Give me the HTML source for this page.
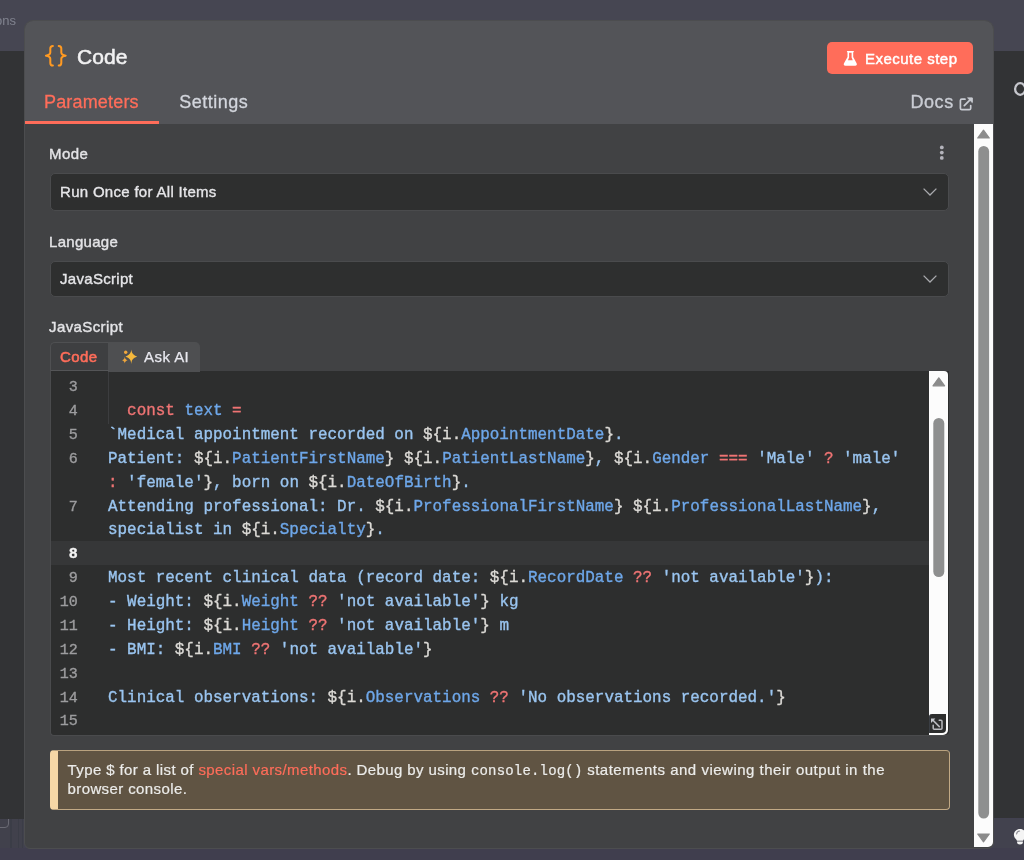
<!DOCTYPE html>
<html><head><meta charset="utf-8"><style>*{box-sizing:border-box;margin:0;padding:0}
html,body{width:1024px;height:860px;overflow:hidden}
#root{position:absolute;left:0;top:0;width:1024px;height:860px;will-change:transform}
body{position:relative;background:#424150;font-family:"Liberation Sans",sans-serif}
.abs{position:absolute}
.t{position:absolute;white-space:pre;line-height:1}
.code{-webkit-text-stroke:0.35px currentColor;position:absolute;white-space:pre;font-family:"Liberation Mono",monospace;font-size:15.925px;line-height:23.88px;height:23.88px}
.s{color:#9ac5f0}.w{color:#dcdad6}.p{color:#6ea7e9}.k{color:#ef7474}
</style></head><body>
<div id="root"><div class="abs" style="left:0;top:0;width:1024px;height:51px;background:#464652"></div>
<span class="t" style="left:-5px;top:13.89px;font-size:13px;color:#80838f;">ons</span>

<div class="abs" style="left:0;top:819px;width:24px;height:29px;background:#41414c"></div>
<div class="abs" style="left:10px;top:819px;width:1.5px;height:29px;background:#3b3d47"></div><div class="abs" style="left:17.5px;top:819px;width:1.5px;height:29px;background:#3b3d47"></div><div class="abs" style="left:21.5px;top:819px;width:1.5px;height:29px;background:#3b3d47"></div>
<div class="abs" style="left:-6px;top:812px;width:15px;height:16px;border:1px solid #6a6a74;border-radius:4px"></div>
<div class="abs" style="left:0;top:51px;width:24px;height:768px;background:#323335"></div>
<div class="abs" style="left:994px;top:51px;width:30px;height:767px;background:#323335"></div>
<svg class="abs" style="left:1008px;top:78px" width="20" height="22" viewBox="0 0 20 22"><ellipse cx="12.2" cy="11" rx="5.1" ry="5.8" fill="none" stroke="#c6c7cd" stroke-width="2.3"/></svg>
<div class="abs" style="left:994px;top:818.7px;width:30px;height:29.3px;background:#42424e"></div>
<div class="abs" style="left:0;top:848px;width:1024px;height:12px;background:#403e4e"></div>
<div class="abs" style="left:24px;top:20px;width:970px;height:829px;background:#414244;border-radius:9px 9px 6px 6px;border:1px solid #4c4d4f;overflow:hidden"><div class="abs" style="left:0;top:0;width:970px;height:102.5px;background:#535458"></div></div>
<svg class="abs" style="left:0;top:0" width="1024" height="860" viewBox="0 0 1024 860">
<g fill="none" stroke="#ff9a22" stroke-width="2" stroke-linecap="round" stroke-linejoin="round">
<path d="M52.9 45.9 C51 45.9 50.3 46.8 50.3 48.5 V52.6 C50.3 53.9 48.6 55.3 45.9 55.7 C48.6 56.1 50.3 57.5 50.3 58.8 V62.9 C50.3 64.6 51 65.6 52.9 65.6"/>
<path d="M58.7 45.9 C60.6 45.9 61.3 46.8 61.3 48.5 V52.6 C61.3 53.9 63 55.3 65.7 55.7 C63 56.1 61.3 57.5 61.3 58.8 V62.9 C61.3 64.6 60.6 65.6 58.7 65.6"/>
</g></svg>
<span class="t" style="left:77px;top:46.42px;font-size:21px;color:#f2f2f3;letter-spacing:0.1px;-webkit-text-stroke:0.55px #f2f2f3;">Code</span>

<div class="abs" style="left:827px;top:42px;width:146px;height:32px;background:#ff6d5a;border-radius:5px"></div>
<svg class="abs" style="left:838px;top:46px" width="24" height="24" viewBox="0 0 24 24">
<path fill="#fff" fill-rule="evenodd" d="M8.8 4.9 H16 L15.2 6.7 V10.9 L18.6 17.3 C19.3 18.7 18.6 19.7 17.2 19.7 H7.4 C6 19.7 5.3 18.7 6 17.3 L9.5 10.9 V6.7 Z M11.1 6.7 V11.4 L9.9 14.3 H14.8 L13.6 11.4 V6.7 Z"/>
</svg>
<span class="t" style="left:865px;top:51.40px;font-size:15px;color:#ffffff;letter-spacing:0.48px;-webkit-text-stroke:0.45px #ffffff;">Execute step</span>

<span class="t" style="left:44px;top:92.96px;font-size:18px;color:#ff6d5a;letter-spacing:0.17px;-webkit-text-stroke:0.3px #ff6d5a;">Parameters</span>

<span class="t" style="left:179.3px;top:93.06px;font-size:18px;color:#d3d6dd;letter-spacing:0.48px;-webkit-text-stroke:0.3px #d3d6dd;">Settings</span>

<div class="abs" style="left:25px;top:121px;width:134px;height:2.6px;background:#ff6d5a"></div>
<span class="t" style="left:910.5px;top:93.26px;font-size:18px;color:#c9ccd3;letter-spacing:0.55px;-webkit-text-stroke:0.35px #c9ccd3;">Docs</span>

<svg class="abs" style="left:954px;top:90px" width="24" height="24" viewBox="0 0 24 24">
<g fill="none" stroke="#c9ccd3" stroke-width="1.7" stroke-linecap="round" stroke-linejoin="round">
<path d="M11 9.2 H7.8 C6.9 9.2 6.4 9.7 6.4 10.6 V18.2 C6.4 19.1 6.9 19.6 7.8 19.6 H15.3 C16.2 19.6 16.7 19.1 16.7 18.2 V15.6"/>
<path d="M10.3 15.7 L16.3 9.7"/>
<path fill="#c9ccd3" stroke-width="1" d="M14 7.9 H18.3 V12.2 Z"/>
</g></svg>
<div class="abs" style="left:974px;top:123.5px;width:19px;height:723.5px;background:#fcfcfc;border-bottom-right-radius:5px"></div>
<svg class="abs" style="left:974px;top:123px" width="19" height="724" viewBox="0 0 19 724"><path fill="#8b8b8b" stroke="#8b8b8b" stroke-width="1.2" stroke-linejoin="round" d="M9.5 7.2 L15.3 15 H3.7 Z"/><rect x="4.3" y="23" width="10.8" height="672.5" rx="5.4" fill="#8e8f8f"/><path fill="#8b8b8b" stroke="#8b8b8b" stroke-width="1.2" stroke-linejoin="round" d="M9.5 718.8 L15.3 711 H3.7 Z"/></svg>
<span class="t" style="left:49px;top:146.10px;font-size:15px;color:#e3e3e6;letter-spacing:0.45px;-webkit-text-stroke:0.4px #e3e3e6;">Mode</span>

<svg class="abs" style="left:938px;top:143px" width="8" height="20" viewBox="0 0 8 20"><g fill="#b4b4bc"><circle cx="3.8" cy="4.4" r="1.9"/><circle cx="3.8" cy="9.6" r="1.9"/><circle cx="3.8" cy="14.9" r="1.9"/></g></svg>
<div class="abs" style="left:50px;top:173px;width:899px;height:38px;background:#2e2f2f;border:1px solid #4a4b4d;border-radius:5px"></div><span class="t" style="left:60px;top:183.80px;font-size:15px;color:#e6e6e9;letter-spacing:0.3px;-webkit-text-stroke:0.35px #e6e6e9;">Run Once for All Items</span>
<svg class="abs" style="left:920px;top:184.0px" width="20" height="16" viewBox="0 0 20 16"><path d="M3.6 4.6 L10 11 L16.4 4.6" fill="none" stroke="#a9aaae" stroke-width="1.3"/></svg>
<span class="t" style="left:49px;top:233.80px;font-size:15px;color:#e3e3e6;letter-spacing:0.3px;-webkit-text-stroke:0.4px #e3e3e6;">Language</span>

<div class="abs" style="left:50px;top:261px;width:899px;height:36px;background:#2e2f2f;border:1px solid #4a4b4d;border-radius:5px"></div><span class="t" style="left:60px;top:271.20px;font-size:15px;color:#e6e6e9;letter-spacing:0.3px;-webkit-text-stroke:0.35px #e6e6e9;">JavaScript</span>
<svg class="abs" style="left:920px;top:271.0px" width="20" height="16" viewBox="0 0 20 16"><path d="M3.6 4.6 L10 11 L16.4 4.6" fill="none" stroke="#a9aaae" stroke-width="1.3"/></svg>
<span class="t" style="left:49px;top:318.80px;font-size:15px;color:#e3e3e6;letter-spacing:0.4px;-webkit-text-stroke:0.4px #e3e3e6;">JavaScript</span>

<div class="abs" style="left:50px;top:342px;width:59px;height:30px;background:#3e3f41;border:1px solid #4f5052;border-right:none;border-radius:5px 0 0 0"></div>
<div class="abs" style="left:108px;top:342px;width:92px;height:30px;background:#4e4f51;border-radius:0 5px 0 0"></div>
<span class="t" style="left:60px;top:349.00px;font-size:15px;color:#ff6d5a;letter-spacing:0.45px;-webkit-text-stroke:0.55px #ff6d5a;">Code</span>

<svg class="abs" style="left:119px;top:347px" width="20" height="20" viewBox="0 0 20 20">
<path fill="#f5b83c" d="M12.3 2.6 C12.9 6.6 13.9 7.9 18.2 9.6 C13.9 11.3 12.9 12.6 12.3 16.9 C11.7 12.6 10.7 11.3 6.4 9.6 C10.7 7.9 11.7 6.6 12.3 2.6 Z"/>
<path fill="#f0a63c" d="M5.8 9.8 C6.1 12 6.7 12.6 8.6 13.2 C6.7 13.9 6.1 14.5 5.8 16.6 C5.5 14.5 4.9 13.9 3 13.2 C4.9 12.6 5.5 12 5.8 9.8 Z"/>
<circle cx="6.7" cy="5.3" r="1.7" fill="#f0a63c"/>
</svg>
<span class="t" style="left:144px;top:348.60px;font-size:15px;color:#e9e9f0;letter-spacing:0.45px;-webkit-text-stroke:0.25px #e9e9f0;">Ask AI</span>

<div class="abs" style="left:50px;top:371px;width:899px;height:364.5px;background:#2d2e2e;border-left:1px solid #4a4b4d;border-bottom:1px solid #4a4b4d;border-radius:0 0 4px 4px"></div>
<div class="abs" style="left:108px;top:371px;width:92px;height:1px;background:#4e4f51"></div>
<div class="abs" style="left:51px;top:370px;width:58px;height:1px;background:#545557"></div>
<div class="abs" style="left:51px;top:541.3px;width:878px;height:23.8px;background:#363738"></div>
<div class="abs" style="left:108px;top:372px;width:1px;height:51.86px;background:#3c3d3f"></div>
<div class="code" style="left:40px;width:37.8px;text-align:right;font-size:15px;top:376.10px;color:#9d9d9f;">3</div>
<div class="code" style="left:40px;width:37.8px;text-align:right;font-size:15px;top:399.98px;color:#9d9d9f;">4</div>
<div class="code" style="left:40px;width:37.8px;text-align:right;font-size:15px;top:423.86px;color:#9d9d9f;">5</div>
<div class="code" style="left:40px;width:37.8px;text-align:right;font-size:15px;top:447.74px;color:#9d9d9f;">6</div>
<div class="code" style="left:40px;width:37.8px;text-align:right;font-size:15px;top:495.50px;color:#9d9d9f;">7</div>
<div class="code" style="left:40px;width:37.8px;text-align:right;font-size:15px;top:543.26px;color:#f4f4f4;font-weight:bold;">8</div>
<div class="code" style="left:40px;width:37.8px;text-align:right;font-size:15px;top:567.14px;color:#9d9d9f;">9</div>
<div class="code" style="left:40px;width:37.8px;text-align:right;font-size:15px;top:591.02px;color:#9d9d9f;">10</div>
<div class="code" style="left:40px;width:37.8px;text-align:right;font-size:15px;top:614.90px;color:#9d9d9f;">11</div>
<div class="code" style="left:40px;width:37.8px;text-align:right;font-size:15px;top:638.78px;color:#9d9d9f;">12</div>
<div class="code" style="left:40px;width:37.8px;text-align:right;font-size:15px;top:662.66px;color:#9d9d9f;">13</div>
<div class="code" style="left:40px;width:37.8px;text-align:right;font-size:15px;top:686.54px;color:#9d9d9f;">14</div>
<div class="code" style="left:40px;width:37.8px;text-align:right;font-size:15px;top:710.42px;color:#9d9d9f;">15</div>
<div class="code" style="left:108px;top:399.98px"><span class="s">  </span><span class="k">const</span><span class="s"> </span><span class="p">text</span><span class="s"> </span><span class="k">=</span></div>
<div class="code" style="left:108px;top:423.86px"><span class="s">`Medical appointment recorded on </span><span class="w">${i.</span><span class="p">AppointmentDate</span><span class="w">}</span><span class="s">.</span></div>
<div class="code" style="left:108px;top:447.74px"><span class="s">Patient: </span><span class="w">${i.</span><span class="p">PatientFirstName</span><span class="w">}</span><span class="s"> </span><span class="w">${i.</span><span class="p">PatientLastName</span><span class="w">}</span><span class="s">, </span><span class="w">${i.</span><span class="p">Gender</span><span class="s"> </span><span class="k">===</span><span class="s"> </span><span class="s">&#x27;Male&#x27;</span><span class="s"> </span><span class="k">?</span><span class="s"> </span><span class="s">&#x27;male&#x27;</span></div>
<div class="code" style="left:108px;top:471.62px"><span class="k">:</span><span class="s"> </span><span class="s">&#x27;female&#x27;</span><span class="w">}</span><span class="s">, born on </span><span class="w">${i.</span><span class="p">DateOfBirth</span><span class="w">}</span><span class="s">.</span></div>
<div class="code" style="left:108px;top:495.50px"><span class="s">Attending professional: Dr. </span><span class="w">${i.</span><span class="p">ProfessionalFirstName</span><span class="w">}</span><span class="s"> </span><span class="w">${i.</span><span class="p">ProfessionalLastName</span><span class="w">}</span><span class="s">,</span></div>
<div class="code" style="left:108px;top:519.38px"><span class="s">specialist in </span><span class="w">${i.</span><span class="p">Specialty</span><span class="w">}</span><span class="s">.</span></div>
<div class="code" style="left:108px;top:567.14px"><span class="s">Most recent clinical data (record date: </span><span class="w">${i.</span><span class="p">RecordDate</span><span class="s"> </span><span class="k">??</span><span class="s"> </span><span class="s">&#x27;not available&#x27;</span><span class="w">}</span><span class="s">):</span></div>
<div class="code" style="left:108px;top:591.02px"><span class="s">- Weight: </span><span class="w">${i.</span><span class="p">Weight</span><span class="s"> </span><span class="k">??</span><span class="s"> </span><span class="s">&#x27;not available&#x27;</span><span class="w">}</span><span class="s"> kg</span></div>
<div class="code" style="left:108px;top:614.90px"><span class="s">- Height: </span><span class="w">${i.</span><span class="p">Height</span><span class="s"> </span><span class="k">??</span><span class="s"> </span><span class="s">&#x27;not available&#x27;</span><span class="w">}</span><span class="s"> m</span></div>
<div class="code" style="left:108px;top:638.78px"><span class="s">- BMI: </span><span class="w">${i.</span><span class="p">BMI</span><span class="s"> </span><span class="k">??</span><span class="s"> </span><span class="s">&#x27;not available&#x27;</span><span class="w">}</span></div>
<div class="code" style="left:108px;top:686.54px"><span class="s">Clinical observations: </span><span class="w">${i.</span><span class="p">Observations</span><span class="s"> </span><span class="k">??</span><span class="s"> </span><span class="s">&#x27;No observations recorded.&#x27;</span><span class="w">}</span></div>
<div class="abs" style="left:929px;top:371px;width:19px;height:364px;background:#fcfcfc;border-radius:0 4px 5px 0"></div>
<svg class="abs" style="left:929px;top:371px" width="19" height="363" viewBox="0 0 19 363"><path fill="#8b8b8b" stroke="#8b8b8b" stroke-width="1.2" stroke-linejoin="round" d="M9.8 6.8 L15.6 14.8 H4 Z"/><rect x="4.3" y="47" width="11" height="159" rx="5.5" fill="#8e8f8f"/></svg>
<div class="abs" style="left:929px;top:714px;width:17px;height:19px;background:#2d2e2e;border-radius:3px 0 4px 0;border-left:1px solid #3a3e44"></div>
<svg class="abs" style="left:929px;top:714px" width="18" height="20" viewBox="0 0 18 20"><g fill="none" stroke="#b9babf" stroke-width="1.5" stroke-linecap="round" stroke-linejoin="round"><path d="M10.2 6.3 H12 Q13 6.3 13 7.3 V14.3 Q13 15.3 12 15.3 H5.2 Q4.2 15.3 4.2 14.3 V11.2"/><path d="M10.3 12.6 L3.6 5.9"/></g><path fill="#c4c6cc" d="M2 4.6 H6.4 L2 9 Z"/></svg>
<div class="abs" style="left:50px;top:750px;width:900px;height:60px;background:#605443;border:1px solid #c2a985;border-top:1.5px solid #b9a27f;border-left:8px solid #f6d7a6;border-radius:4px"></div>
<div id="hint" class="abs" style="left:67.5px;top:760.6px;width:870px;font-size:15px;line-height:18px;letter-spacing:0.4px;white-space:nowrap;-webkit-text-stroke-width:0.2px"><span style="color:#ececea">Type $ for a list of </span><span style="color:#ff6d5a">special vars/methods</span><span style="color:#ececea">. Debug by using </span><span style="font-family:'Liberation Mono',monospace;font-size:14px;color:#ececea;letter-spacing:0.18px">console.log()</span><span style="color:#ececea;letter-spacing:0.5px"> statements and viewing their output in the</span><br><span style="color:#ececea">browser console.</span></div>
<svg class="abs" style="left:1013px;top:828px" width="14" height="18" viewBox="0 0 14 18"><path fill="#f4f4f4" d="M7 0.9 C3.6 0.9 0.9 3.5 0.9 6.7 C0.9 8.6 1.8 9.9 2.9 10.9 C3.5 11.5 3.9 12.1 3.9 12.7 H10.1 C10.1 12.1 10.5 11.5 11.1 10.9 C12.2 9.9 13.1 8.6 13.1 6.7 C13.1 3.5 10.4 0.9 7 0.9 Z M4.1 13.6 H9.9 V14.4 C9.9 15.6 8.7 16.4 7 16.4 C5.3 16.4 4.1 15.6 4.1 14.4 Z"/><path d="M3.6 6 C3.8 4.4 5 3.2 6.6 3" fill="none" stroke="#8a8a92" stroke-width="1.1" stroke-linecap="round"/></svg></div>
</body></html>
